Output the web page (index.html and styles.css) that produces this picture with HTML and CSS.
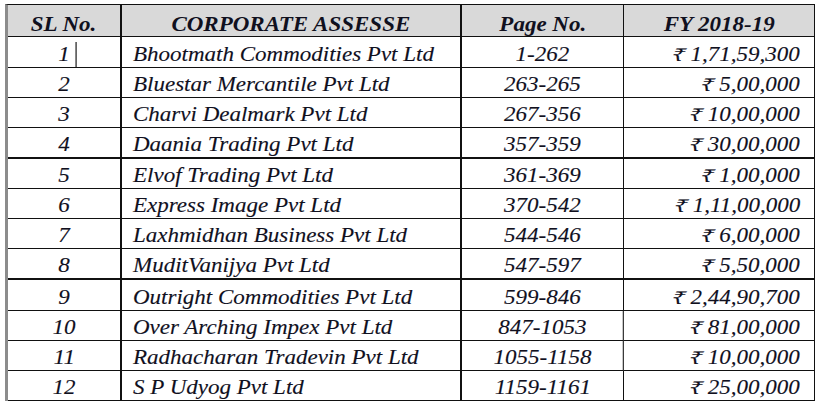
FILE: index.html
```html
<!DOCTYPE html>
<html>
<head>
<meta charset="utf-8">
<link rel="stylesheet" href="styles.css">
</head>
<body>
<div class="sheet">
  <div class="row head">
    <div class="cell c1"><span class="t">SL No.</span></div>
    <div class="cell c2 center"><span class="t">CORPORATE ASSESSE</span></div>
    <div class="cell c3"><span class="t">Page No.</span></div>
    <div class="cell c4 center"><span class="t">FY 2018-19</span></div>
  </div>
  <div class="row first">
    <div class="cell c1"><span class="t caret">1</span></div>
    <div class="cell c2"><span class="t">Bhootmath Commodities Pvt Ltd</span></div>
    <div class="cell c3"><span class="t">1-262</span></div>
    <div class="cell c4"><span class="t"><span class="inr">₹</span> 1,71,59,300</span></div>
  </div>
  <div class="row">
    <div class="cell c1"><span class="t">2</span></div>
    <div class="cell c2"><span class="t">Bluestar Mercantile Pvt Ltd</span></div>
    <div class="cell c3"><span class="t">263-265</span></div>
    <div class="cell c4"><span class="t"><span class="inr">₹</span> 5,00,000</span></div>
  </div>
  <div class="row">
    <div class="cell c1"><span class="t">3</span></div>
    <div class="cell c2"><span class="t">Charvi Dealmark Pvt Ltd</span></div>
    <div class="cell c3"><span class="t">267-356</span></div>
    <div class="cell c4"><span class="t"><span class="inr">₹</span> 10,00,000</span></div>
  </div>
  <div class="row thick">
    <div class="cell c1"><span class="t">4</span></div>
    <div class="cell c2"><span class="t">Daania Trading Pvt Ltd</span></div>
    <div class="cell c3"><span class="t">357-359</span></div>
    <div class="cell c4"><span class="t"><span class="inr">₹</span> 30,00,000</span></div>
  </div>
  <div class="row">
    <div class="cell c1"><span class="t">5</span></div>
    <div class="cell c2"><span class="t">Elvof Trading Pvt Ltd</span></div>
    <div class="cell c3"><span class="t">361-369</span></div>
    <div class="cell c4"><span class="t"><span class="inr">₹</span> 1,00,000</span></div>
  </div>
  <div class="row">
    <div class="cell c1"><span class="t">6</span></div>
    <div class="cell c2"><span class="t">Express Image Pvt Ltd</span></div>
    <div class="cell c3"><span class="t">370-542</span></div>
    <div class="cell c4"><span class="t"><span class="inr">₹</span> 1,11,00,000</span></div>
  </div>
  <div class="row">
    <div class="cell c1"><span class="t">7</span></div>
    <div class="cell c2"><span class="t">Laxhmidhan Business Pvt Ltd</span></div>
    <div class="cell c3"><span class="t">544-546</span></div>
    <div class="cell c4"><span class="t"><span class="inr">₹</span> 6,00,000</span></div>
  </div>
  <div class="row thick">
    <div class="cell c1"><span class="t">8</span></div>
    <div class="cell c2"><span class="t">MuditVanijya Pvt Ltd</span></div>
    <div class="cell c3"><span class="t">547-597</span></div>
    <div class="cell c4"><span class="t"><span class="inr">₹</span> 5,50,000</span></div>
  </div>
  <div class="row tall">
    <div class="cell c1"><span class="t">9</span></div>
    <div class="cell c2"><span class="t">Outright Commodities Pvt Ltd</span></div>
    <div class="cell c3"><span class="t">599-846</span></div>
    <div class="cell c4"><span class="t"><span class="inr">₹</span> 2,44,90,700</span></div>
  </div>
  <div class="row">
    <div class="cell c1"><span class="t">10</span></div>
    <div class="cell c2"><span class="t">Over Arching Impex Pvt Ltd</span></div>
    <div class="cell c3 soft"><span class="t">847-1053</span></div>
    <div class="cell c4"><span class="t"><span class="inr">₹</span> 81,00,000</span></div>
  </div>
  <div class="row">
    <div class="cell c1"><span class="t">11</span></div>
    <div class="cell c2"><span class="t">Radhacharan Tradevin Pvt Ltd</span></div>
    <div class="cell c3 soft"><span class="t">1055-1158</span></div>
    <div class="cell c4"><span class="t"><span class="inr">₹</span> 10,00,000</span></div>
  </div>
  <div class="row">
    <div class="cell c1"><span class="t">12</span></div>
    <div class="cell c2"><span class="t">S P Udyog Pvt Ltd</span></div>
    <div class="cell c3"><span class="t">1159-1161</span></div>
    <div class="cell c4"><span class="t"><span class="inr">₹</span> 25,00,000</span></div>
  </div>
</div>
</body>
</html>
```
FILE: styles.css
```css
html, body {
  margin: 0;
  padding: 0;
  background: #ffffff;
}

body {
  padding: 4px 0 0 5px;
  font-family: "Liberation Serif", "DejaVu Serif", serif;
  font-style: italic;
  font-size: 20px;
  color: #10101e;
  -webkit-text-stroke: 0.12px #10101e;
}

.sheet {
  position: relative;
  width: max-content;
  border-left: 3px solid #8c8c8c;
  border-top: 1px solid #111111;
}

.sheet::after {
  content: "";
  position: absolute;
  right: 0;
  top: 100%;
  width: 1px;
  height: 9px;
  background: #111111;
}

.row {
  display: grid;
  grid-template-columns: 114px 340px 162px 191px;
  height: 30px;
}

.row.first,
.row.tall {
  height: 31px;
}

.row.head {
  height: 32px;
  background: #d9d9d9;
  font-weight: bold;
  -webkit-text-stroke: 0;
}

.cell {
  box-sizing: border-box;
  display: flex;
  align-items: center;
  justify-content: center;
  border-right: 1px solid #111111;
  border-bottom: 1px solid #111111;
  padding-top: 4px;
  white-space: nowrap;
}

.head .cell {
  padding-top: 7px;
}

.row.thick {
  height: 31px;
}

.row.thick .cell {
  border-bottom-width: 2px;
}

.c1,
.c2 {
  border-right-width: 2px;
}

.c2 {
  justify-content: flex-start;
  padding-left: 11px;
}

.c4 {
  justify-content: flex-end;
  padding-right: 14px;
}

.c2.center,
.c4.center {
  justify-content: center;
  padding-left: 0;
  padding-right: 0;
}

.soft {
  border-right-color: #3a3a3a;
  box-shadow: inset -2px 0 0 -1px #c8c8c8;
}

.t {
  display: inline-block;
  transform: scaleX(1.15);
  transform-origin: center;
}

.c2 .t {
  transform-origin: left center;
}

.c4 .t {
  transform-origin: right center;
}

.c2.center .t,
.c4.center .t {
  transform-origin: center;
}

.inr {
  display: inline-block;
  font-family: "DejaVu Serif", "Noto Sans", serif;
  font-size: 17px;
  transform: skewX(-12deg);
}

.caret {
  position: relative;
}

.caret::after {
  content: "";
  position: absolute;
  left: calc(100% + 5px);
  top: -1px;
  width: 1px;
  height: 25px;
  background: #111111;
}
```
